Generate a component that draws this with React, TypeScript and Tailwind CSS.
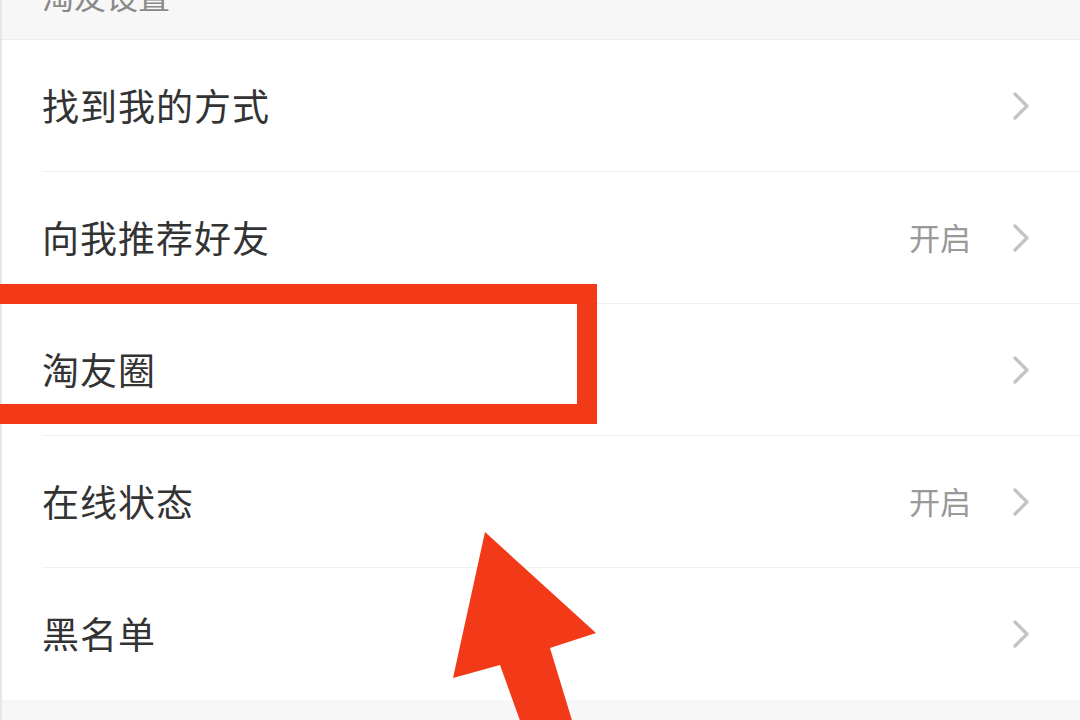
import React from 'react';

const rows = [
  { label: '找到我的方式', value: '' },
  { label: '向我推荐好友', value: '开启' },
  { label: '淘友圈', value: '' },
  { label: '在线状态', value: '开启' },
  { label: '黑名单', value: '' },
];

const Chevron = () => (
  <svg width="16" height="28" viewBox="0 0 16 28" fill="none">
    <path d="M2 2 L14 14 L2 26" stroke="#c4c4c4" strokeWidth="3.4" strokeLinecap="round" strokeLinejoin="round" />
  </svg>
);

const App = () => {
  return (
    <div
      className="relative w-[1080px] h-[720px] overflow-hidden bg-[#f7f7f7]"
      style={{ fontFamily: '"Noto Sans CJK SC", "Noto Sans", sans-serif' }}
    >
      <div className="h-full border-l-2 border-[#e6e6e6]">
        {/* section header, mostly scrolled off the top */}
        <div className="h-[40px] overflow-hidden border-b border-[#ececec] pl-[40px]">
          <div className="text-[32px] leading-[32px] text-[#8a8a8a] -mt-[21px]">淘友设置</div>
        </div>

        <div className="bg-white">
          {rows.map((row, i) => (
            <div key={row.label} className="pl-[40px]">
              <div
                className={`h-[132px] flex items-center pr-[51px] ${
                  i < rows.length - 1 ? 'border-b border-[#f0f0f0]' : ''
                }`}
              >
                <span className="flex-1 text-[37px] text-[#333333] tracking-[1px]">{row.label}</span>
                {row.value && (
                  <span className="text-[31px] text-[#999999] mr-[42px]">{row.value}</span>
                )}
                <Chevron />
              </div>
            </div>
          ))}
        </div>
      </div>

      {/* annotation box */}
      <div className="absolute left-[-40px] top-[284px] w-[637px] h-[140px] border-[20px] border-[#f33a18]" />

      {/* annotation arrow */}
      <svg className="absolute left-0 top-0" width="1080" height="720" viewBox="0 0 1080 720">
        <polygon
          points="485,532 596,633 550,648 578,740 527,740 500,665 453,678"
          fill="#f33a18"
        />
      </svg>
    </div>
  );
};

export default App;
